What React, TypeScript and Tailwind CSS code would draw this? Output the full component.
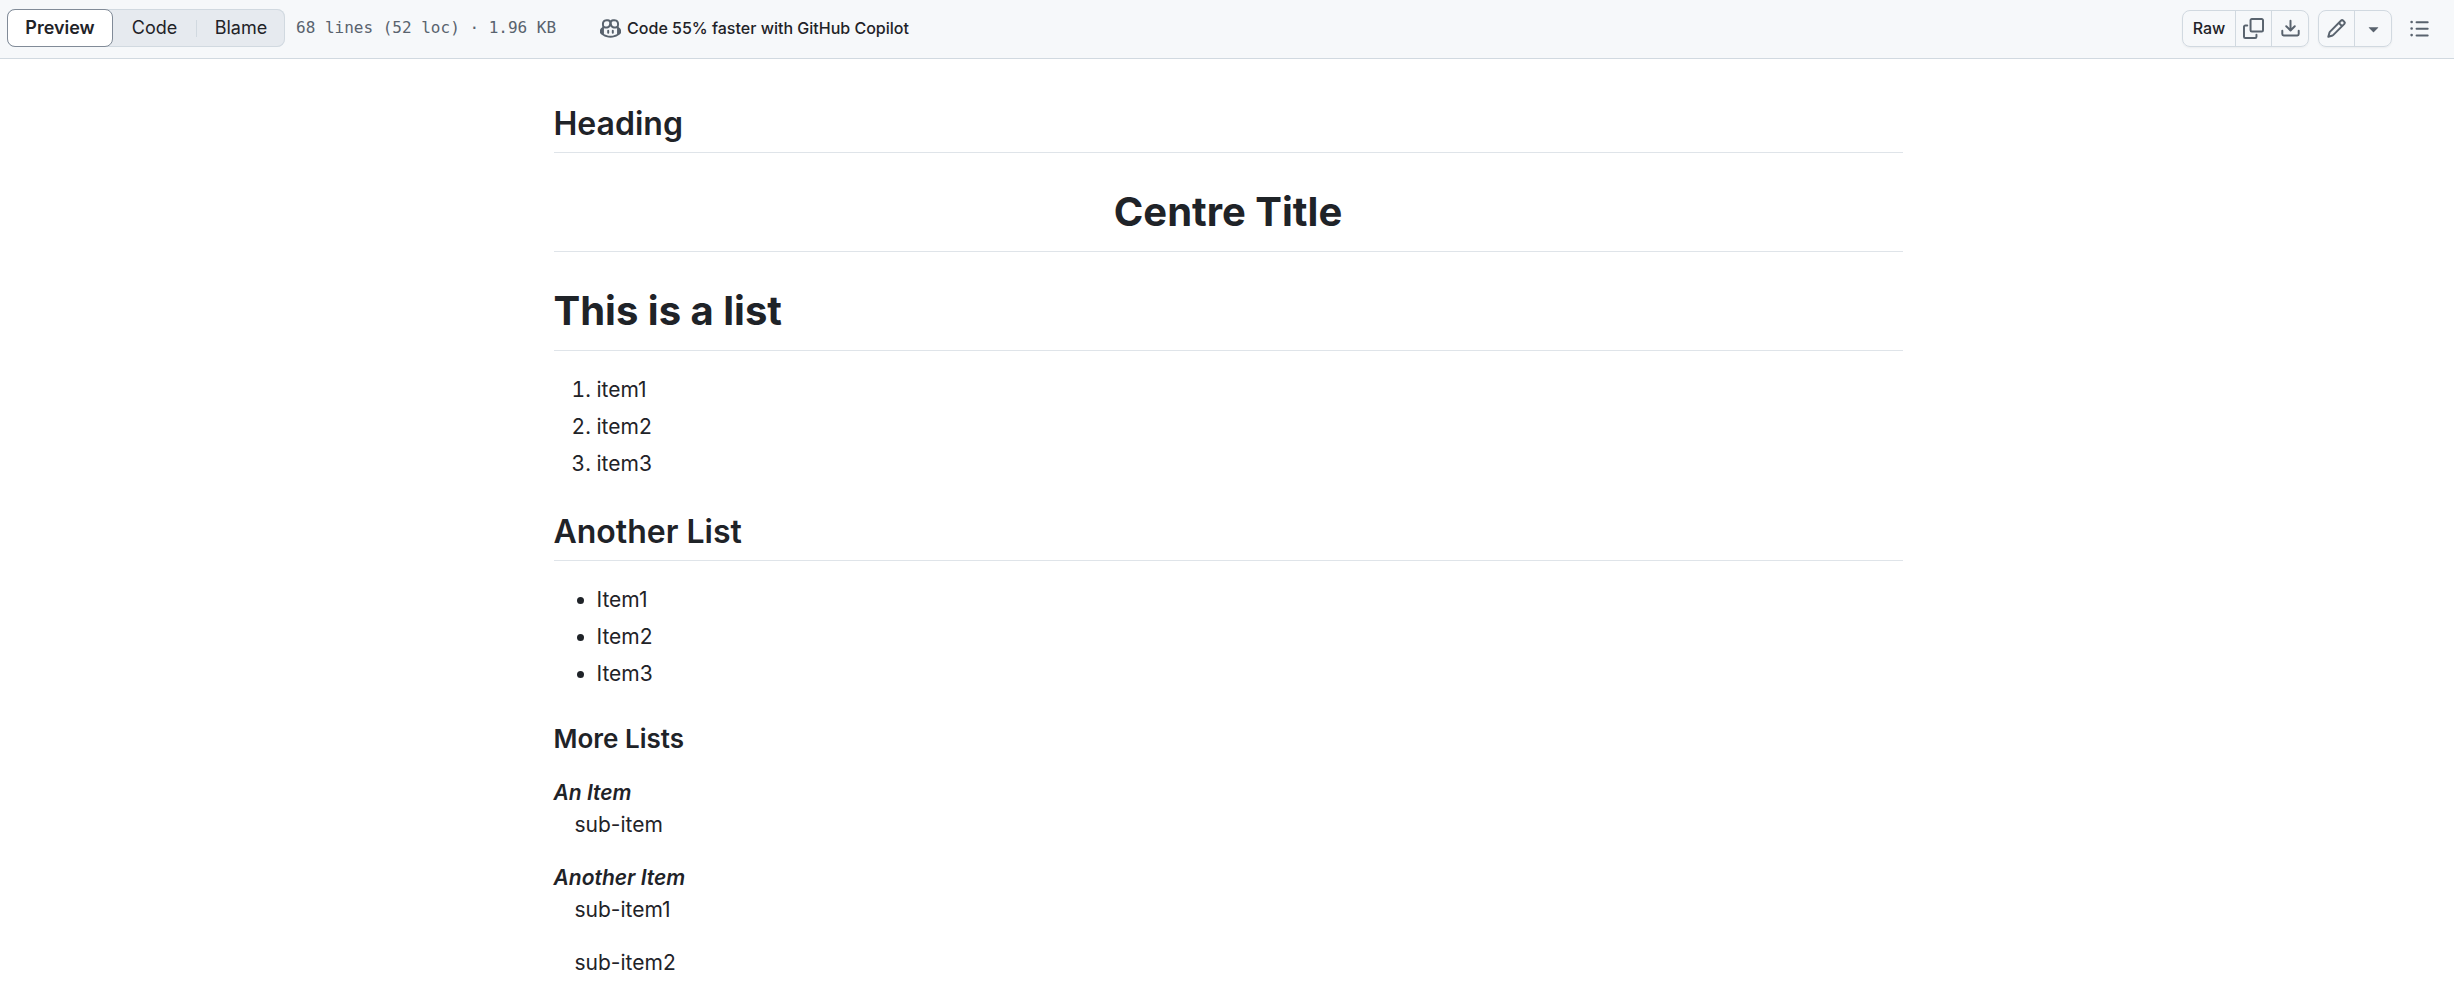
import type { ReactNode } from "react";

const icons = {
  copilot: [
    "M7.998 15.035c-4.562 0-7.873-2.914-7.998-3.749V9.338c.085-.628.677-1.686 1.588-2.065.013-.07.024-.143.036-.218.029-.183.06-.384.126-.612-.201-.508-.254-1.084-.254-1.656 0-.87.128-1.769.693-2.484.579-.733 1.494-1.124 2.724-1.261 1.206-.134 2.262.034 2.944.765.05.053.096.108.139.165.044-.057.094-.112.143-.165.682-.731 1.738-.899 2.944-.765 1.23.137 2.145.528 2.724 1.261.566.715.693 1.614.693 2.484 0 .572-.053 1.148-.254 1.656.066.228.098.429.126.612.012.076.024.148.037.218.924.385 1.522 1.471 1.591 2.095v1.872c0 .766-3.351 3.795-8.002 3.795Zm0-1.485c2.28 0 4.584-1.11 5.002-1.433V7.862l-.023-.116c-.49.21-1.075.291-1.727.291-1.146 0-2.059-.327-2.71-.991A3.222 3.222 0 0 1 8 6.303a3.24 3.24 0 0 1-.544.743c-.65.664-1.563.991-2.71.991-.652 0-1.236-.081-1.727-.291l-.023.116v4.255c.419.323 2.722 1.433 5.002 1.433ZM6.762 2.83c-.193-.206-.637-.413-1.682-.297-1.019.113-1.479.404-1.713.7-.247.312-.369.789-.369 1.554 0 .793.129 1.171.308 1.371.162.181.519.379 1.442.379.853 0 1.339-.235 1.638-.54.315-.322.527-.827.617-1.553.117-.935-.037-1.395-.241-1.614Zm4.155-.297c-1.044-.116-1.488.091-1.681.297-.204.219-.359.679-.242 1.614.091.726.303 1.231.618 1.553.299.305.784.54 1.638.54.922 0 1.28-.198 1.442-.379.179-.2.308-.578.308-1.371 0-.765-.123-1.242-.37-1.554-.233-.296-.693-.587-1.713-.7Z",
    "M6.25 9.037a.75.75 0 0 1 .75.75v1.501a.75.75 0 0 1-1.5 0V9.787a.75.75 0 0 1 .75-.75Zm4.25.75v1.501a.75.75 0 0 1-1.5 0V9.787a.75.75 0 0 1 1.5 0Z",
  ],
  copy: [
    "M0 6.75C0 5.784.784 5 1.75 5h1.5a.75.75 0 0 1 0 1.5h-1.5a.25.25 0 0 0-.25.25v7.5c0 .138.112.25.25.25h7.5a.25.25 0 0 0 .25-.25v-1.5a.75.75 0 0 1 1.5 0v1.5A1.75 1.75 0 0 1 9.25 16h-7.5A1.75 1.75 0 0 1 0 14.25Z",
    "M5 1.75C5 .784 5.784 0 6.75 0h7.5C15.216 0 16 .784 16 1.75v7.5A1.75 1.75 0 0 1 14.25 11h-7.5A1.75 1.75 0 0 1 5 9.25Zm1.75-.25a.25.25 0 0 0-.25.25v7.5c0 .138.112.25.25.25h7.5a.25.25 0 0 0 .25-.25v-7.5a.25.25 0 0 0-.25-.25Z",
  ],
  download: [
    "M2.75 14A1.75 1.75 0 0 1 1 12.25v-2.5a.75.75 0 0 1 1.5 0v2.5c0 .138.112.25.25.25h10.5a.25.25 0 0 0 .25-.25v-2.5a.75.75 0 0 1 1.5 0v2.5A1.75 1.75 0 0 1 13.25 14Z",
    "M7.25 7.689V2a.75.75 0 0 1 1.5 0v5.689l1.97-1.969a.749.749 0 1 1 1.06 1.06l-3.25 3.25a.749.749 0 0 1-1.06 0L4.22 6.78a.749.749 0 1 1 1.06-1.06l1.97 1.969Z",
  ],
  pencil: [
    "M11.013 1.427a1.75 1.75 0 0 1 2.474 0l1.086 1.086a1.75 1.75 0 0 1 0 2.474l-8.61 8.61c-.21.21-.47.364-.756.445l-3.251.93a.75.75 0 0 1-.927-.928l.929-3.25c.081-.286.235-.547.445-.758l8.61-8.61Zm.176 4.823L9.75 4.81l-6.286 6.287a.253.253 0 0 0-.064.108l-.558 1.953 1.953-.558a.253.253 0 0 0 .108-.064Zm1.238-3.763a.25.25 0 0 0-.354 0L10.811 3.75l1.439 1.44 1.263-1.263a.25.25 0 0 0 0-.354Z",
  ],
  triangle: [
    "m4.427 7.427 3.396 3.396a.25.25 0 0 0 .354 0l3.396-3.396A.25.25 0 0 0 11.396 7H4.604a.25.25 0 0 0-.177.427Z",
  ],
  list: [
    "M5.75 2.5h8.5a.75.75 0 0 1 0 1.5h-8.5a.75.75 0 0 1 0-1.5Zm0 5h8.5a.75.75 0 0 1 0 1.5h-8.5a.75.75 0 0 1 0-1.5Zm0 5h8.5a.75.75 0 0 1 0 1.5h-8.5a.75.75 0 0 1 0-1.5ZM2 14a1 1 0 1 1 0-2 1 1 0 0 1 0 2Zm1-6a1 1 0 1 1-2 0 1 1 0 0 1 2 0ZM2 4a1 1 0 1 1 0-2 1 1 0 0 1 0 2Z",
  ],
};

function Icon({ name }: { name: keyof typeof icons }) {
  return (
    <svg viewBox="0 0 16 16" className="size-[21px] shrink-0 fill-[#59636e]" aria-hidden="true">
      {icons[name].map((d) => (
        <path key={d} d={d} />
      ))}
    </svg>
  );
}

function ButtonGroup({ children }: { children: ReactNode }) {
  return (
    <div className="flex h-[37px] divide-x divide-[#d1d9e0] rounded-lg border border-[#d1d9e0] shadow-xs">
      {children}
    </div>
  );
}

function IconButton({ name, label }: { name: keyof typeof icons; label: string }) {
  return (
    <button type="button" aria-label={label} className="flex w-9 items-center justify-center">
      <Icon name={name} />
    </button>
  );
}

function Toolbar() {
  return (
    <header className="flex items-center border-b border-[#d1d9e0] bg-[#f6f8fa] pt-[9px] pr-[17px] pb-[11px] pl-[7px]">
      <div className="flex h-[38px] items-center rounded-lg bg-[#e6eaef] text-lg ring-1 ring-[#d1d9e0] ring-inset">
        <button
          type="button"
          aria-pressed="true"
          className="h-full w-[106px] rounded-lg border border-[#818b98] bg-white font-semibold"
        >
          Preview
        </button>
        <button type="button" className="w-[83px]">
          Code
        </button>
        <span className="h-[17px] w-px bg-[#d1d9e0]" />
        <button type="button" className="w-[88px]">
          Blame
        </button>
      </div>
      <span className="ml-[11px] font-['DejaVu_Sans_Mono',monospace] text-base text-[#59636e]">
        68 lines (52 loc) · 1.96 KB
      </span>
      <button type="button" className="ml-11 flex items-center gap-1.5 text-base font-medium">
        <Icon name="copilot" />
        Code 55% faster with GitHub Copilot
      </button>
      <div className="ml-auto flex items-center gap-[9px]">
        <ButtonGroup>
          <button type="button" className="w-[53px] text-base font-medium">
            Raw
          </button>
          <IconButton name="copy" label="Copy raw file" />
          <IconButton name="download" label="Download raw file" />
        </ButtonGroup>
        <ButtonGroup>
          <IconButton name="pencil" label="Edit this file" />
          <IconButton name="triangle" label="More edit options" />
        </ButtonGroup>
        <IconButton name="list" label="Outline" />
      </div>
    </header>
  );
}

function H1({ children, center }: { children: ReactNode; center?: boolean }) {
  return (
    <h1
      className={
        center
          ? "mt-8 border-b border-[#dfe4e9] pb-3 text-center text-[40px] leading-[54px] font-bold"
          : "mt-8 border-b border-[#dfe4e9] pb-3 text-[40px] leading-[54px] font-bold"
      }
    >
      {children}
    </h1>
  );
}

function H2({ children }: { children: ReactNode }) {
  return (
    <h2 className="mt-8 border-b border-[#dfe4e9] pb-2 text-[32px] leading-10 font-semibold">
      {children}
    </h2>
  );
}

export default function App() {
  return (
    <div className="bg-white font-[Inter,sans-serif] text-[#1f2328]">
      <Toolbar />
      <main className="pt-[13px] pb-[5px] pl-0.5">
        <article className="mx-auto max-w-[1349px] text-[21px] leading-8">
          <H2>Heading</H2>
          <H1 center>Centre Title</H1>
          <H1>This is a list</H1>
          <ol className="mt-[23px] flex list-decimal flex-col gap-[5px] pl-[43px]">
            <li>item1</li>
            <li>item2</li>
            <li>item3</li>
          </ol>
          <H2>Another List</H2>
          <ul className="mt-[23px] flex list-disc flex-col gap-[5px] pl-[43px]">
            <li>Item1</li>
            <li>Item2</li>
            <li>Item3</li>
          </ul>
          <h3 className="mt-8 text-[26px] leading-[34px] font-semibold">More Lists</h3>
          <dl className="mt-[21px]">
            <dt className="font-semibold italic">An Item</dt>
            <dd className="mb-[21px] pl-[21px]">sub-item</dd>
            <dt className="font-semibold italic">Another Item</dt>
            <dd className="mb-[21px] pl-[21px]">sub-item1</dd>
            <dd className="pl-[21px]">sub-item2</dd>
          </dl>
        </article>
      </main>
    </div>
  );
}
